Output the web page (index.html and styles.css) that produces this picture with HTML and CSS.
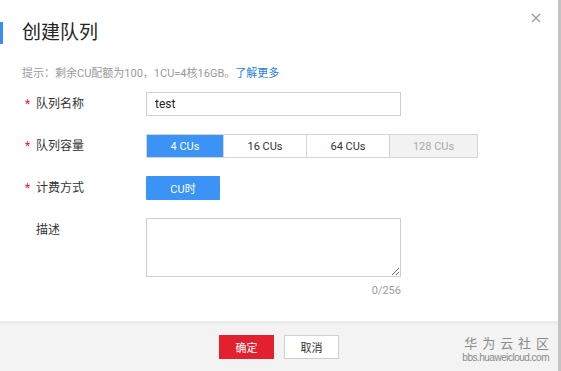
FILE: index.html
```html
<!DOCTYPE html>
<html lang="zh-CN">
<head>
    <meta charset="UTF-8">
    <title>创建队列</title>
    <link rel="stylesheet" href="styles.css">
</head>
<body>
    <div class="dialog">
        <div class="dialog-header">
            <h2 class="dialog-title">创建队列</h2>
            <svg class="close-btn" width="10" height="10" viewBox="0 0 10 10">
                <path d="M1 1 L9 9 M9 1 L1 9" stroke="#9a9a9a" stroke-width="1.3" fill="none"/>
            </svg>
        </div>

        <div class="dialog-body">
            <p class="hint">提示：剩余CU配额为100，1CU=4核16GB。<a href="#">了解更多</a></p>

            <div class="form-row">
                <label class="form-label"><span class="req">*</span>队列名称</label>
                <input class="text-input" type="text" value="test">
            </div>

            <div class="form-row">
                <label class="form-label"><span class="req">*</span>队列容量</label>
                <div class="segments">
                    <button class="seg active">4 CUs</button>
                    <button class="seg">16 CUs</button>
                    <button class="seg">64 CUs</button>
                    <button class="seg disabled">128 CUs</button>
                </div>
            </div>

            <div class="form-row">
                <label class="form-label"><span class="req">*</span>计费方式</label>
                <button class="seg active single">CU时</button>
            </div>

            <div class="form-row top">
                <label class="form-label"><span class="req"></span>描述</label>
                <div class="desc-box">
                    <textarea class="desc-input"></textarea>
                    <div class="counter">0/256</div>
                </div>
            </div>
        </div>

        <div class="dialog-footer">
            <button class="btn btn-ok">确定</button>
            <button class="btn btn-cancel">取消</button>
            <div class="watermark">
                <div class="wm-name">华 为 云 社 区</div>
                <div class="wm-url">bbs.huaweicloud.com</div>
            </div>
        </div>
    </div>
</body>
</html>
```

FILE: styles.css
```css
body {
    margin: 0;
    background-color: #c4c4c4;
    font-family: Roboto, "Noto Sans CJK SC", sans-serif;
    color: #333;
}
.dialog {
    width: 558px;
    height: 371px;
    background-color: #fff;
    position: relative;
    display: flex;
    flex-direction: column;
}
.dialog-header {
    padding-top: 22px;
    position: relative;
}
.dialog-title {
    margin: 0;
    border-left: 3px solid #3a8ef0;
    padding-left: 19px;
    font-size: 19px;
    font-weight: normal;
    line-height: 22px;
    color: #252525;
}
.close-btn {
    position: absolute;
    top: 13px;
    right: 17px;
}
.dialog-body {
    padding: 0 0 0 22px;
    flex: 1;
}
.hint {
    margin: 22px 0 10px;
    font-size: 11px;
    line-height: 16px;
    color: #9a9a9a;
}
.hint a {
    color: #2b7fe0;
    text-decoration: none;
}
.form-row {
    display: flex;
    align-items: center;
    margin-bottom: 18px;
}
.form-row.top {
    align-items: flex-start;
    margin-bottom: 0;
}
.form-label {
    width: 124px;
    padding-left: 3px;
    box-sizing: border-box;
    font-size: 12px;
    line-height: 24px;
    color: #333;
}
.req {
    display: inline-block;
    width: 11px;
    color: #e3202e;
}
.text-input {
    width: 255px;
    height: 24px;
    box-sizing: border-box;
    border: 1px solid #cfcfcf;
    padding: 0 8px;
    font-family: Roboto, sans-serif;
    font-size: 12px;
    color: #222;
    outline: none;
}
.segments {
    display: flex;
    border: 1px solid #d4d4d4;
}
.seg {
    height: 22px;
    width: 83px;
    border: none;
    border-left: 1px solid #d4d4d4;
    background-color: #fff;
    font-family: Roboto, "Noto Sans CJK SC", sans-serif;
    font-size: 11px;
    color: #333;
    padding: 0;
}
.seg:first-child {
    border-left: none;
    width: 76px;
}
.seg.disabled {
    width: 88px;
    background-color: #f2f2f3;
    color: #aaa;
}
.seg.active {
    background-color: #3a93f5;
    color: #fff;
}
.seg.single {
    width: 74px;
    height: 24px;
    border: none;
    border-radius: 1px;
}
.desc-box {
    width: 255px;
}
.desc-input {
    display: block;
    width: 255px;
    height: 59px;
    box-sizing: border-box;
    border: 1px solid #cfcfcf;
    resize: vertical;
    margin: 0;
}
.counter {
    text-align: right;
    font-size: 11px;
    color: #9a9a9a;
    margin-top: 7px;
}
.dialog-footer {
    height: 50px;
    box-sizing: border-box;
    border-top: 3px solid #ececec;
    background-color: #f3f3f3;
    display: flex;
    justify-content: center;
    align-items: flex-start;
    gap: 10px;
    padding-top: 11px;
    position: relative;
}
.btn {
    height: 24px;
    width: 55px;
    font-family: "Noto Sans CJK SC", sans-serif;
    font-size: 11px;
    padding: 0;
}
.btn-ok {
    background-color: #e3202e;
    color: #fff;
    border: none;
}
.btn-cancel {
    background-color: #fff;
    color: #333;
    border: 1px solid #cfcfcf;
}
.watermark {
    position: absolute;
    right: 9px;
    top: 12px;
    text-align: right;
    color: #8a8a8a;
}
.wm-name {
    font-family: "Noto Sans CJK SC", sans-serif;
    font-size: 13px;
    line-height: 14px;
    letter-spacing: 1px;
    margin-right: -1px;
}
.wm-url {
    font-family: "Liberation Sans", sans-serif;
    font-size: 10px;
    line-height: 11px;
    margin-top: 2px;
    letter-spacing: -0.5px;
}
```
